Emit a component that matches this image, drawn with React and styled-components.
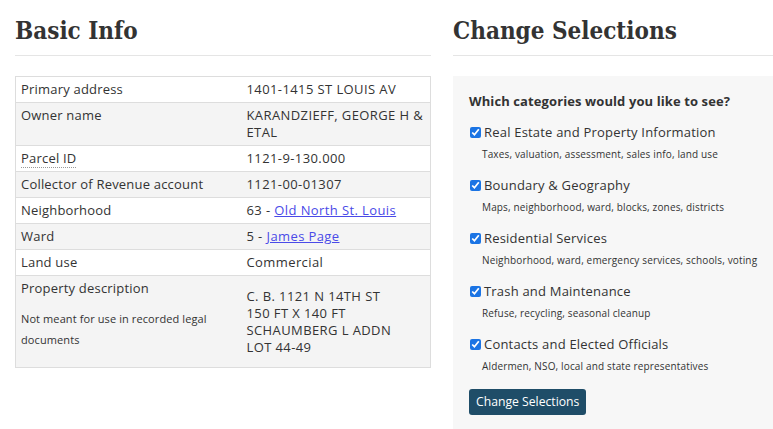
import React from "react";
import styled, { createGlobalStyle } from "styled-components";

const Global = createGlobalStyle`
  html, body { margin: 0; padding: 0; background: #fff; }
  body { font-family: "Open Sans", "Liberation Sans", sans-serif; color: #333; }
  * { box-sizing: border-box; }
`;

const Page = styled.div`
  display: grid;
  grid-template-columns: 416px 320px;
  column-gap: 22px;
  padding: 0 0 0 15px;
  width: 773px;
  overflow: hidden;
`;

const Column = styled.section`
  display: flex;
  flex-direction: column;
`;

const Heading = styled.h2`
  margin: 0;
  padding: 14px 0 8px;
  font-family: "DejaVu Serif Condensed", "DejaVu Serif", "Liberation Serif", serif;
  font-stretch: condensed;
  font-weight: 700;
  font-size: 24px;
  line-height: 33px;
  color: #333;
  border-bottom: 1px solid #e5e5e5;
  margin-bottom: 20px;
`;

const Table = styled.table`
  border-collapse: collapse;
  width: 100%;
  border: 1px solid #ddd;
  font-size: 13px;
  line-height: 17px;
`;

const Row = styled.tr`
  background: ${(p) => (p.$shaded ? "#f4f4f4" : "#fff")};
  border-bottom: 1px solid #ddd;
`;

const Label = styled.td`
  width: 225px;
  padding: 4px 6px 4px 5px;
  vertical-align: top;
  font-weight: 500;
  letter-spacing: 0.2px;
`;

const Value = styled.td`
  padding: 4px 6px;
  vertical-align: top;
  letter-spacing: 0.4px;
`;

const Abbr = styled.abbr`
  text-decoration: none;
  border-bottom: 1px dotted #999;
`;

const Note = styled.p`
  margin: 11px 0 13px;
  font-size: 11px;
  line-height: 21px;
  font-weight: 500;
  letter-spacing: 0.1px;
`;

const Pre = styled.div`
  padding-top: 8px;
  white-space: pre-line;
`;

const Link = styled.a`
  color: #4a4ae8;
  text-decoration: underline;
`;

const Panel = styled.form`
  background: #f7f7f7;
  padding: 16px 16px 14px;
  display: flex;
  flex-direction: column;
  width: 330px;
  height: 353px;
`;

const Question = styled.div`
  font-weight: 700;
  font-size: 13px;
  line-height: 18px;
  margin-bottom: 13px;
  letter-spacing: 0.1px;
`;

const Item = styled.label`
  display: flex;
  flex-direction: column;
  margin-bottom: 13px;
`;

const ItemTitle = styled.span`
  display: flex;
  align-items: center;
  gap: 2px;
  font-size: 13px;
  font-weight: 500;
  line-height: 18px;
  letter-spacing: 0.2px;
`;

const Check = styled.input`
  margin: 0 1px;
  width: 11px;
  height: 11px;
  accent-color: #1b74e4;
`;

const ItemDesc = styled.span`
  font-size: 10px;
  line-height: 22px;
  padding: 2px 0 0 13px;
  margin-bottom: -2px;
  letter-spacing: 0.15px;
`;

const Button = styled.button`
  align-self: flex-start;
  margin-top: 1px;
  background: #1f4d68;
  color: #fff;
  border: none;
  border-radius: 3px;
  font-family: "Open Sans", "Liberation Sans", sans-serif;
  font-size: 12.2px;
  line-height: 26px;
  padding: 0 7px;
`;

const rows = [
  { label: "Primary address", value: "1401-1415 ST LOUIS AV" },
  { label: "Owner name", value: "KARANDZIEFF, GEORGE H & ETAL" },
  { label: <Abbr title="Parcel ID">Parcel ID</Abbr>, value: "1121-9-130.000" },
  { label: "Collector of Revenue account", value: "1121-00-01307" },
  { label: "Neighborhood", value: <>63 - <Link href="#">Old North St. Louis</Link></> },
  { label: "Ward", value: <>5 - <Link href="#">James Page</Link></> },
  { label: "Land use", value: "Commercial" },
];

const items = [
  ["Real Estate and Property Information", "Taxes, valuation, assessment, sales info, land use"],
  ["Boundary & Geography", "Maps, neighborhood, ward, blocks, zones, districts"],
  ["Residential Services", "Neighborhood, ward, emergency services, schools, voting"],
  ["Trash and Maintenance", "Refuse, recycling, seasonal cleanup"],
  ["Contacts and Elected Officials", "Aldermen, NSO, local and state representatives"],
];

export default function App() {
  return (
    <>
      <Global />
      <Page>
        <Column>
          <Heading>Basic Info</Heading>
          <Table>
            <tbody>
              {rows.map((r, i) => (
                <Row key={i} $shaded={i % 2 === 1}>
                  <Label>{r.label}</Label>
                  <Value>{r.value}</Value>
                </Row>
              ))}
              <Row $shaded>
                <Label>
                  Property description
                  <Note>Not meant for use in recorded legal documents</Note>
                </Label>
                <Value>
                  <Pre>{"C. B. 1121 N 14TH ST\n150 FT X 140 FT\nSCHAUMBERG L ADDN\nLOT 44-49"}</Pre>
                </Value>
              </Row>
            </tbody>
          </Table>
        </Column>
        <Column>
          <Heading>Change Selections</Heading>
          <Panel onSubmit={(e) => e.preventDefault()}>
            <Question>Which categories would you like to see?</Question>
            {items.map(([t, d]) => (
              <Item key={t}>
                <ItemTitle>
                  <Check type="checkbox" defaultChecked />
                  {t}
                </ItemTitle>
                <ItemDesc>{d}</ItemDesc>
              </Item>
            ))}
            <Button type="submit">Change Selections</Button>
          </Panel>
        </Column>
      </Page>
    </>
  );
}
